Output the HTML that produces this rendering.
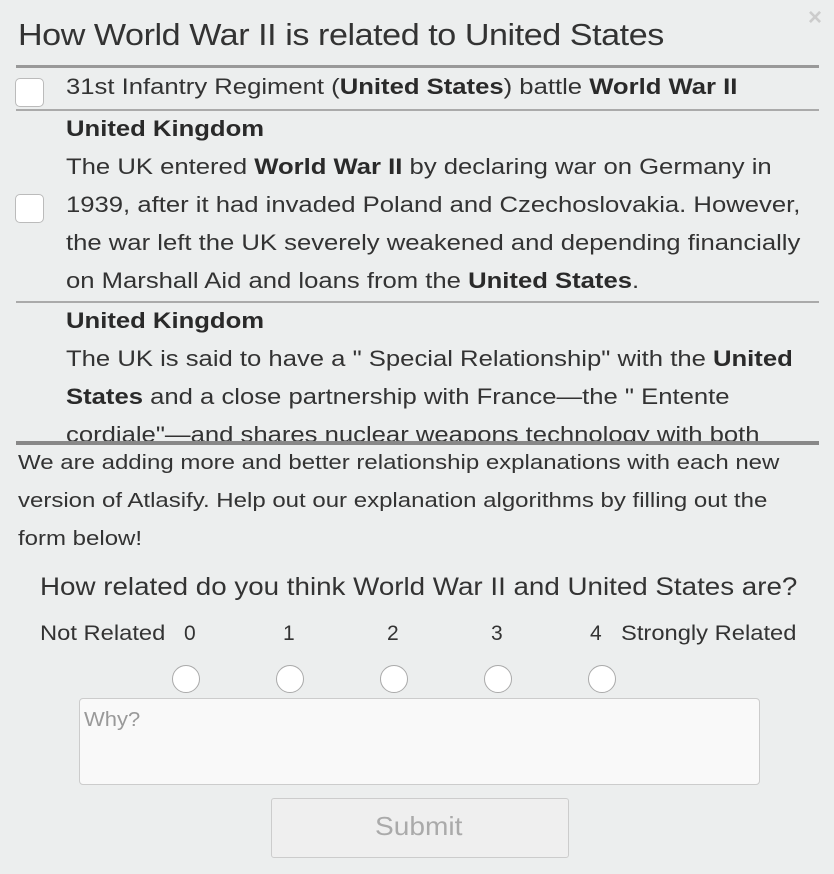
<!DOCTYPE html>
<html><head><meta charset="utf-8"><style>
body{margin:0;width:834px;height:874px;background:#eceeee;font-family:"Liberation Sans",sans-serif;color:#333;position:relative;overflow:hidden}
.a{position:absolute;white-space:nowrap;transform-origin:0 0}
b{font-weight:bold;color:#2a2a2a}
.t{font-size:22.5px;transform:scaleX(1.14)}
.hr{position:absolute;left:16px;width:803px;background:#999}
.cb{position:absolute;left:15px;width:27px;height:27px;border:1px solid #bbb;border-radius:5px;background:#fff}
.r{position:absolute;top:665px;width:26px;height:26px;border:1px solid #aaa;border-radius:50%;background:#fff}
.p{font-size:20px;transform:scaleX(1.2)}
.s{font-size:21px;transform:scaleX(1.13)}
</style></head><body>
<div class="a" style="left:808px;top:4px;font-size:24px;color:#ccc;font-weight:bold">×</div>
<div class="a" style="left:18px;top:17px;font-size:31px;letter-spacing:-0.4px;color:#333;transform:scaleX(1.1)">How World War II is related to United States</div>
<div class="hr" style="top:65px;height:3px"></div>
<div class="cb" style="top:78px"></div>
<div class="a t" style="left:66px;top:74px">31st Infantry Regiment (<b>United States</b>) battle <b>World War II</b></div>
<div class="hr" style="top:109px;height:2px;background:#aaa"></div>
<div class="a t" style="left:66px;top:116px"><b>United Kingdom</b></div>
<div class="a t" style="left:66px;top:154px">The UK entered <b>World War II</b> by declaring war on Germany in</div>
<div class="cb" style="top:194px"></div>
<div class="a t" style="left:66px;top:192px">1939, after it had invaded Poland and Czechoslovakia. However,</div>
<div class="a t" style="left:66px;top:230px">the war left the UK severely weakened and depending financially</div>
<div class="a t" style="left:66px;top:268px">on Marshall Aid and loans from the <b>United States</b>.</div>
<div class="hr" style="top:301px;height:2px;background:#aaa"></div>
<div class="a t" style="left:66px;top:308px"><b>United Kingdom</b></div>
<div class="a t" style="left:66px;top:346px">The UK is said to have a " Special Relationship" with the <b>United</b></div>
<div class="a t" style="left:66px;top:384px"><b>States</b> and a close partnership with France—the " Entente</div>
<div style="position:absolute;left:0;top:418px;width:834px;height:24px;overflow:hidden"><div class="a t" style="left:66px;top:4px">cordiale"—and shares nuclear weapons technology with both</div></div>
<div class="hr" style="top:441px;height:4px;background:#888"></div>
<div class="a p" style="left:18px;top:452px">We are adding more and better relationship explanations with each new</div>
<div class="a p" style="left:18px;top:490px">version of Atlasify. Help out our explanation algorithms by filling out the</div>
<div class="a p" style="left:18px;top:528px">form below!</div>
<div class="a" style="left:40px;top:573px;font-size:25px;transform:scaleX(1.11)">How related do you think World War II and United States are?</div>
<div class="a s" style="left:40px;top:622px">Not Related</div>
<div class="a" style="left:184px;top:622px;font-size:21px">0</div>
<div class="a" style="left:283px;top:622px;font-size:21px">1</div>
<div class="a" style="left:387px;top:622px;font-size:21px">2</div>
<div class="a" style="left:491px;top:622px;font-size:21px">3</div>
<div class="a" style="left:590px;top:622px;font-size:21px">4</div>
<div class="a s" style="left:621px;top:622px">Strongly Related</div>
<div class="r" style="left:172px"></div><div class="r" style="left:276px"></div><div class="r" style="left:380px"></div><div class="r" style="left:484px"></div><div class="r" style="left:588px"></div>
<div style="position:absolute;left:79px;top:698px;width:679px;height:85px;border:1px solid #ccc;border-radius:4px;background:#f9f9f9"></div>
<div class="a" style="left:84px;top:709px;font-size:20px;color:#999;transform:scaleX(1.1)">Why?</div>
<div style="position:absolute;left:271px;top:798px;width:296px;height:58px;border:1px solid #ccc;border-radius:3px;background:#efefef"></div>
<div class="a" style="left:375px;top:811px;font-size:26px;color:#aaa;transform:scaleX(1.08)">Submit</div>
</body></html>
